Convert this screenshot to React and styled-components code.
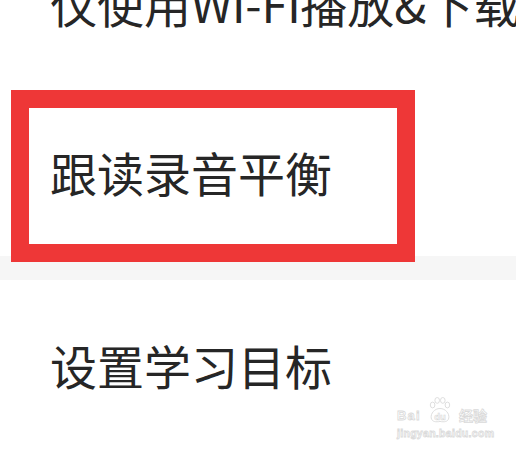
import React from "react"
import styled, { createGlobalStyle } from "styled-components"

const GlobalStyle = createGlobalStyle`
  html, body {
    margin: 0;
    padding: 0;
    background: #fff;
  }
  body {
    font-family: "Noto Sans CJK SC", "Noto Sans", sans-serif;
  }
`

const Screen = styled.div`
  position: relative;
  width: 516px;
  height: 454px;
  overflow: hidden;
  background: #fff;
`

// list is scrolled a little, so the first row is cut at the top
const SettingsList = styled.div`
  display: flex;
  flex-direction: column;
  margin-top: -82px;
`

const Row = styled.div`
  position: relative;
  display: flex;
  align-items: center;
  height: 169px;
  padding-left: 50px;
  font-size: 47px;
  line-height: 1;
  color: #262626;
  white-space: nowrap;
`

const Divider = styled.div`
  height: 24px;
  background: #f6f6f6;
`

const Highlight = styled.div`
  position: absolute;
  left: 11px;
  top: 3px;
  width: 404px;
  height: 172px;
  box-sizing: border-box;
  border: 18px solid #ee3737;
  z-index: 2;
`

const Watermark = styled.div`
  position: absolute;
  right: 29px;
  bottom: 16px;
  width: 90px;
  display: flex;
  flex-direction: column;
  color: #fff;
  -webkit-text-stroke: 0.8px #dadada;
  font-family: "Liberation Sans", Arial, sans-serif;
  font-weight: 700;
`

const BrandLine = styled.div`
  display: flex;
  align-items: flex-end;
  justify-content: space-between;
  font-size: 13px;
  line-height: 1;
`

const Bai = styled.span`
  letter-spacing: 1.2px;
  margin-bottom: 1px;
`

const Paw = styled.svg`
  display: block;
`

const Jingyan = styled.span`
  font-family: "Noto Sans CJK SC", sans-serif;
  font-size: 14px;
  margin-bottom: 1px;
`

const Domain = styled.div`
  margin-top: 5px;
  font-size: 10.5px;
  line-height: 1;
  letter-spacing: 0.3px;
  white-space: nowrap;
`

const rows = ["仅使用Wi-Fi播放&下载", "跟读录音平衡"]

const App = () => {
  return (
    <Screen>
      <GlobalStyle />
      <SettingsList>
        <Row>{rows[0]}</Row>
        <Row>
          {rows[1]}
          <Highlight />
        </Row>
        <Divider />
        <Row>设置学习目标</Row>
      </SettingsList>

      <Watermark>
        <BrandLine>
          <Bai>Bai</Bai>
          <Paw width="22" height="26" viewBox="0 0 22 26">
            <g fill="#fff" stroke="#dadada" strokeWidth="0.9">
              <ellipse cx="3.6" cy="8" rx="2.3" ry="2.9" />
              <ellipse cx="8.2" cy="3.4" rx="2.3" ry="2.9" />
              <ellipse cx="13.8" cy="3.4" rx="2.3" ry="2.9" />
              <ellipse cx="18.4" cy="8" rx="2.3" ry="2.9" />
              <path d="M11 11.5 C 5.5 11.5, 1.5 16.5, 2.2 21 C 3 25, 7 25.2, 11 24.4 C 15 25.2, 19 25, 19.8 21 C 20.5 16.5, 16.5 11.5, 11 11.5 Z" />
            </g>
            <text
              x="11"
              y="22.5"
              textAnchor="middle"
              fontSize="9.5"
              fontWeight="700"
              fontFamily="Liberation Sans, Arial, sans-serif"
              fill="#fff"
              stroke="#dadada"
              strokeWidth="0.6"
            >
              du
            </text>
          </Paw>
          <Jingyan>经验</Jingyan>
        </BrandLine>
        <Domain>jingyan.baidu.com</Domain>
      </Watermark>
    </Screen>
  )
}

export default App
